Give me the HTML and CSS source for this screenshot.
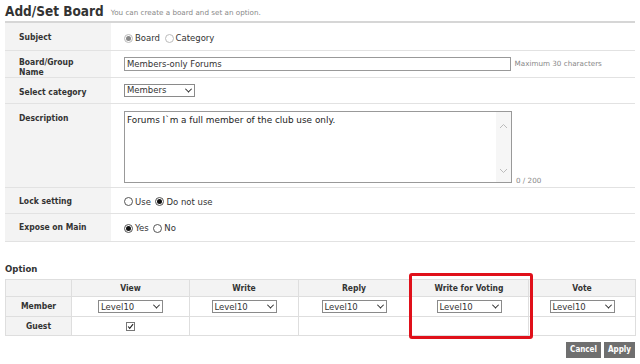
FILE: index.html
```html
<!DOCTYPE html>
<html lang="en">
<head>
    <meta charset="UTF-8">
    <title>Add/Set Board</title>
    <link rel="stylesheet" href="styles.css">
</head>
<body>
    <div class="page-head">
        <h1>Add/Set Board</h1>
        <span class="page-desc">You can create a board and set an option.</span>
    </div>
    <!-- Board settings -->
    <table class="form-table">
        <tr class="row-subject">
            <th>Subject</th>
            <td>
                <label class="radio"><span class="dot on soft"></span>Board</label>
                <label class="radio"><span class="dot soft"></span>Category</label>
            </td>
        </tr>
        <tr class="row-name">
            <th>Board/Group<br>Name</th>
            <td>
                <span class="text-input wide">Members-only Forums</span>
                <span class="hint">Maximum 30 characters</span>
            </td>
        </tr>
        <tr class="row-cat">
            <th>Select category</th>
            <td><span class="select cat">Members</span></td>
        </tr>
        <tr class="row-desc">
            <th>Description</th>
            <td>
                <div class="desc-wrap">
                    <div class="textarea">
                        <div class="ta-text">Forums I`m a full member of the club use only.</div>
                        <div class="ta-scroll">
                            <svg width="9" height="6" viewBox="0 0 9 6"><path d="M1 5 L4.5 1.5 L8 5" fill="none" stroke="#bbb" stroke-width="1"/></svg>
                            <svg width="9" height="6" viewBox="0 0 9 6"><path d="M1 1 L4.5 4.5 L8 1" fill="none" stroke="#bbb" stroke-width="1"/></svg>
                        </div>
                    </div>
                    <span class="hint count">0 / 200</span>
                </div>
            </td>
        </tr>
        <tr class="row-lock">
            <th>Lock setting</th>
            <td>
                <label class="radio"><span class="dot"></span>Use</label>
                <label class="radio"><span class="dot on"></span>Do not use</label>
            </td>
        </tr>
        <tr class="row-expose">
            <th>Expose on Main</th>
            <td>
                <label class="radio"><span class="dot on"></span>Yes</label>
                <label class="radio"><span class="dot"></span>No</label>
            </td>
        </tr>
    </table>

    <div class="option-section">
        <h2>Option</h2>
        <table class="option-table">
            <colgroup>
                <col style="width:66px">
                <col style="width:118px">
                <col style="width:109px">
                <col style="width:111px">
                <col style="width:119px">
                <col style="width:107px">
            </colgroup>
            <tr class="opt-head">
                <th></th>
                <th>View</th>
                <th>Write</th>
                <th>Reply</th>
                <th>Write for Voting</th>
                <th>Vote</th>
            </tr>
            <tr class="opt-member">
                <th>Member</th>
                <td><span class="select level">Level10</span></td>
                <td><span class="select level">Level10</span></td>
                <td><span class="select level">Level10</span></td>
                <td><span class="select level">Level10</span></td>
                <td><span class="select level">Level10</span></td>
            </tr>
            <tr class="opt-guest">
                <th>Guest</th>
                <td><span class="checkbox"><svg width="9" height="9" viewBox="0 0 9 9"><path d="M1.5 4.5 L3.5 7 L7.8 1.5" fill="none" stroke="#222" stroke-width="1.4"/></svg></span></td>
                <td></td>
                <td></td>
                <td></td>
                <td></td>
            </tr>
        </table>
        <!-- highlight marker -->
        <div class="highlight"></div>
        <div class="actions">
            <button class="btn">Cancel</button>
            <button class="btn">Apply</button>
        </div>
    </div>
</body>
</html>
```

FILE: styles.css
```css
html, body {
    margin: 0;
    padding: 0;
    background: #fff;
}
body {
    padding: 0 5px;
    font-family: "DejaVu Sans", Verdana, sans-serif;
    color: #333;
    font-size: 8px;
}
.page-head {
    height: 21px;
    display: flex;
    align-items: center;
    gap: 7px;
}
.page-head h1 {
    margin: 0;
    font-family: "DejaVu Sans Condensed", "DejaVu Sans", sans-serif;
    font-size: 13.5px;
    font-weight: bold;
    color: #333;
}
.page-desc {
    font-size: 7.2px;
    color: #888;
    padding-top: 3px;
}
/* Form table */
.form-table {
    width: 630px;
    border-collapse: collapse;
    border-top: 2px solid #d6d6d6;
}
.form-table th {
    width: 92px;
    background: #f3f3f3;
    text-align: left;
    vertical-align: top;
    padding: 9px 0 0 14px;
    font-family: "DejaVu Sans Condensed", "DejaVu Sans", sans-serif;
    font-size: 8.5px;
    font-weight: bold;
    color: #333;
    line-height: 10px;
}
.form-table td {
    padding: 0 0 0 13px;
    border-bottom: 1px solid #e2e2e2;
    vertical-align: middle;
}
.form-table tr {
    border-bottom: 1px solid #e2e2e2;
}
.row-subject { height: 28px; }
.row-subject td { padding-top: 4px; }
.row-name { height: 26px; }
.row-name th { padding-top: 6px; }
.row-cat { height: 26px; }
.row-desc { height: 84px; }
.row-desc th { padding-top: 9px; }
.row-desc td { vertical-align: top; padding-top: 7px; }
.row-lock { height: 26px; }
.row-lock th { padding-top: 8px; }
.row-lock td { padding-top: 3px; }
.row-expose { height: 28px; }
.row-expose th { padding-top: 8px; }
.row-expose td { padding-top: 2px; }

.radio {
    display: inline-flex;
    align-items: center;
    vertical-align: middle;
    gap: 2px;
    margin-right: 2px;
    font-size: 8.5px;
    line-height: 10px;
    color: #333;
}
.dot {
    width: 9px;
    height: 9px;
    border: 1px solid #555;
    border-radius: 50%;
    box-sizing: border-box;
    display: inline-flex;
    align-items: center;
    justify-content: center;
    background: #fff;
}
.dot.on::after {
    content: "";
    width: 5px;
    height: 5px;
    border-radius: 50%;
    background: #111;
}
.dot.soft {
    border-color: #bbb;
}
.dot.soft.on::after {
    background: #888;
}
.text-input {
    display: inline-block;
    box-sizing: border-box;
    border: 1px solid #999;
    height: 14px;
    line-height: 12px;
    padding-left: 2px;
    font-size: 8.5px;
    color: #333;
    vertical-align: middle;
}
.text-input.wide {
    width: 387px;
}
.hint {
    font-size: 7.2px;
    color: #888;
    vertical-align: middle;
    margin-left: 1px;
}
.select {
    display: inline-flex;
    align-items: center;
    justify-content: space-between;
    box-sizing: border-box;
    border: 1px solid #8a8a8a;
    height: 13px;
    padding: 0 3px 0 2px;
    font-size: 8.5px;
    color: #333;
    background: #fff;
    vertical-align: middle;
}
.select::after {
    content: "";
    width: 4px;
    height: 4px;
    border-right: 1.5px solid #222;
    border-bottom: 1.5px solid #222;
    transform: rotate(45deg) translate(-1px, -1px);
}
.select.cat { width: 71px; }
.select.level { width: 65px; }

.desc-wrap {
    display: flex;
    align-items: flex-end;
    gap: 3px;
}
.textarea {
    width: 388px;
    height: 72px;
    box-sizing: border-box;
    border: 1px solid #999;
    display: flex;
}
.ta-text {
    flex: 1;
    padding: 3px 2px;
    font-size: 8.9px;
    color: #222;
}
.ta-scroll {
    width: 15px;
    background: #f6f6f6;
    display: flex;
    flex-direction: column;
    justify-content: space-between;
    align-items: center;
    padding: 11px 0 8px;
}
.count {
    margin-bottom: -2px;
}
/* Option section */
.option-section {
    position: relative;
    margin-top: 21px;
}
.option-section h2 {
    margin: 0 0 4px 0;
    font-family: "DejaVu Sans Condensed", "DejaVu Sans", sans-serif;
    font-size: 9.5px;
    font-weight: bold;
    color: #333;
    line-height: 12px;
}
.option-table {
    width: 630px;
    border-collapse: collapse;
    table-layout: fixed;
}
.option-table th,
.option-table td {
    border: 1px solid #dedede;
    text-align: center;
    padding: 0;
    font-size: 8.5px;
}
.option-table th {
    background: #f3f3f3;
    font-family: "DejaVu Sans Condensed", "DejaVu Sans", sans-serif;
    font-weight: bold;
    color: #333;
}
.opt-head { height: 17px; }
.opt-member { height: 20px; }
.opt-guest { height: 19px; }
.opt-member td { padding-top: 1px; }
.checkbox {
    display: inline-flex;
    width: 9px;
    height: 9px;
    border: 1px solid #777;
    box-sizing: border-box;
    align-items: center;
    justify-content: center;
    vertical-align: middle;
    background: #fff;
}
.highlight {
    position: absolute;
    left: 404px;
    top: 10px;
    width: 124px;
    height: 66px;
    box-sizing: border-box;
    border: 3px solid #e0101a;
    border-radius: 3px;
}
.actions {
    display: flex;
    justify-content: flex-end;
    gap: 3px;
    margin-top: 6px;
}
.btn {
    background: #6f6f6f;
    color: #fff;
    border: none;
    font-family: "DejaVu Sans Condensed", "DejaVu Sans", sans-serif;
    font-weight: bold;
    font-size: 8px;
    height: 16px;
    padding: 0 4px;
    cursor: pointer;
}
```
